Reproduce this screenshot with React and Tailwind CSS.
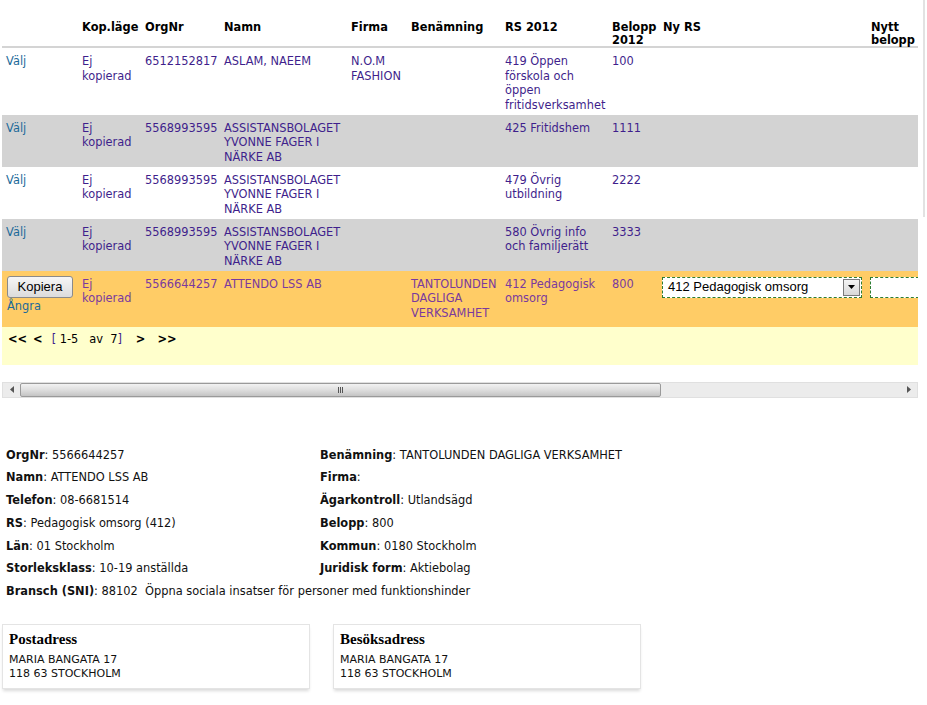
import React from "react";

const rows = [
  {
    bg: "bg-white",
    kop: "Ej kopierad",
    org: "6512152817",
    namn: "ASLAM, NAEEM",
    firma: "N.O.M FASHION",
    ben: "",
    rs: "419 Öppen förskola och öppen fritidsverksamhet",
    belopp: "100",
    h: "h-[67px]",
  },
  {
    bg: "bg-[#d3d3d3]",
    kop: "Ej kopierad",
    org: "5568993595",
    namn: "ASSISTANSBOLAGET YVONNE FAGER I NÄRKE AB",
    firma: "",
    ben: "",
    rs: "425 Fritidshem",
    belopp: "1111",
    h: "h-[52px]",
  },
  {
    bg: "bg-white",
    kop: "Ej kopierad",
    org: "5568993595",
    namn: "ASSISTANSBOLAGET YVONNE FAGER I NÄRKE AB",
    firma: "",
    ben: "",
    rs: "479 Övrig utbildning",
    belopp: "2222",
    h: "h-[52px]",
  },
  {
    bg: "bg-[#d3d3d3]",
    kop: "Ej kopierad",
    org: "5568993595",
    namn: "ASSISTANSBOLAGET YVONNE FAGER I NÄRKE AB",
    firma: "",
    ben: "",
    rs: "580 Övrig info och familjerätt",
    belopp: "3333",
    h: "h-[52px]",
  },
];

const left = [
  ["OrgNr", "5566644257"],
  ["Namn", "ATTENDO LSS AB"],
  ["Telefon", "08-6681514"],
  ["RS", "Pedagogisk omsorg (412)"],
  ["Län", "01 Stockholm"],
  ["Storleksklass", "10-19 anställda"],
];

const right = [
  ["Benämning", "TANTOLUNDEN DAGLIGA VERKSAMHET"],
  ["Firma", ""],
  ["Ägarkontroll", "Utlandsägd"],
  ["Belopp", "800"],
  ["Kommun", "0180 Stockholm"],
  ["Juridisk form", "Aktiebolag"],
];

const td = "align-top pt-[6px] pb-[2px] pl-[4px] pr-[1px]";
const th = "align-top text-left font-bold pt-[21px] pb-0 pl-[4px] pr-[1px] leading-[12.5px]";

const Field = ({ label, value }) => (
  <div className="whitespace-nowrap">
    <span className="font-bold">{label}</span>: {value}
  </div>
);

const AddressBox = ({ title }) => (
  <div className="w-[308px] border border-[#e4e4e4] bg-white pl-[6px] pt-[4px] pb-[7px] shadow-[0_3px_3px_-1px_rgba(0,0,0,0.15)]">
    <div className="font-['Liberation_Serif','DejaVu_Serif',serif] text-[15px] font-bold leading-[20px] text-black">
      {title}
    </div>
    <div className="mt-[4px] text-[11px] leading-[14px] text-[#111]">
      <div>MARIA BANGATA 17</div>
      <div>118 63 STOCKHOLM</div>
    </div>
  </div>
);

export default function App() {
  return (
    <div className="w-[927px] min-h-[705px] bg-white font-['DejaVu_Sans','Verdana',sans-serif] text-[11.4px] text-black">
      <div className="flex">
        <div className="w-[923px]">
          {/* grid */}
          <div className="ml-[2px] w-[916px] overflow-hidden">
            <table className="w-[1010px] table-fixed border-collapse leading-[14.67px]">
              <colgroup>
                <col className="w-[76px]" />
                <col className="w-[63px]" />
                <col className="w-[79px]" />
                <col className="w-[127px]" />
                <col className="w-[60px]" />
                <col className="w-[94px]" />
                <col className="w-[107px]" />
                <col className="w-[51px]" />
                <col className="w-[208px]" />
                <col className="w-[145px]" />
              </colgroup>
              <thead>
                <tr className="border-b-2 border-[#d4d4d4]">
                  <th className={th}></th>
                  <th className={th}>Kop.läge</th>
                  <th className={th}>OrgNr</th>
                  <th className={th}>Namn</th>
                  <th className={th}>Firma</th>
                  <th className={th}>Benämning</th>
                  <th className={th}>RS 2012</th>
                  <th className={th}>
                    Belopp
                    <br />
                    2012
                  </th>
                  <th className={th}>Ny RS</th>
                  <th className={th}>
                    Nytt
                    <br />
                    belopp
                  </th>
                </tr>
              </thead>
              <tbody className="text-[#3f1f8c]">
                {rows.map((r, i) => (
                  <tr key={i} className={`${r.bg} ${r.h}`}>
                    <td className={`${td} text-[#1d6a9a]`}>Välj</td>
                    <td className={td}>{r.kop}</td>
                    <td className={td}>{r.org}</td>
                    <td className={td}>{r.namn}</td>
                    <td className={td}>{r.firma}</td>
                    <td className={td}>{r.ben}</td>
                    <td className={td}>{r.rs}</td>
                    <td className={td}>{r.belopp}</td>
                    <td className={td}></td>
                    <td className={td}></td>
                  </tr>
                ))}
                <tr className="h-[56px] bg-[#ffcc66] text-[#7a3a9e]">
                  <td className="align-top pt-[5px] pl-[5px]">
                    <button className="block h-[22px] w-[66px] rounded-[3px] border border-[#8a8a8a] bg-gradient-to-b from-[#f6f6f6] to-[#dcdcdc] font-['Liberation_Sans',Arial,sans-serif] text-[13px] leading-[20px] text-black">
                      Kopiera
                    </button>
                    <div className="mt-[1px] text-[#1d6a9a]">Ångra</div>
                  </td>
                  <td className={td}>Ej kopierad</td>
                  <td className={td}>5566644257</td>
                  <td className={td}>ATTENDO LSS AB</td>
                  <td className={td}></td>
                  <td className={td}>TANTOLUNDEN DAGLIGA VERKSAMHET</td>
                  <td className={td}>412 Pedagogisk omsorg</td>
                  <td className={td}>800</td>
                  <td className="align-top pt-[6px] pl-[3px]">
                    <div className="flex h-[21px] w-[200px] items-center justify-between border border-dashed border-[#2e7d32] bg-white pl-[5px] pr-[1px] font-['Liberation_Sans',Arial,sans-serif] text-[13px] text-black">
                      <span>412 Pedagogisk omsorg</span>
                      <span className="flex h-[17px] w-[17px] items-center justify-center border border-[#7a7a7a] bg-gradient-to-b from-[#f4f4f4] to-[#d8d8d8]">
                        <svg width="7" height="4" viewBox="0 0 7 4">
                          <path d="M0 0h7L3.5 4z" fill="#000" />
                        </svg>
                      </span>
                    </div>
                  </td>
                  <td className="align-top pt-[6px] pl-[3px]">
                    <div className="h-[21px] w-[100px] border border-dashed border-[#2e7d32] bg-white"></div>
                  </td>
                </tr>
                <tr className="h-[38px] bg-[#ffffcc] text-black">
                  <td colSpan={10} className="align-top pl-[6px] pt-[5px]">
                    <span className="font-bold">&lt;&lt;</span>
                    <span className="ml-[6px] font-bold">&lt;</span>
                    <span className="ml-[9px] text-[#3f1f8c]">[</span>
                    <span> 1-5&nbsp;&nbsp; av&nbsp; 7</span>
                    <span className="text-[#3f1f8c]">]</span>
                    <span className="ml-[14px] font-bold">&gt;</span>
                    <span className="ml-[12px] font-bold">&gt;&gt;</span>
                  </td>
                </tr>
              </tbody>
            </table>
          </div>

          {/* horizontal scrollbar */}
          <div className="ml-[2px] mt-[17px] flex h-[16px] w-[916px] items-center border border-[#e0e0e0] bg-[#ececec]">
            <div className="flex w-[17px] items-center justify-center">
              <svg width="4" height="7" viewBox="0 0 4 7">
                <path d="M4 0v7L0 3.5z" fill="#555" />
              </svg>
            </div>
            <div className="flex h-[14px] w-[641px] items-center justify-center rounded-[2px] border border-[#9a9a9a] bg-gradient-to-b from-[#f2f2f2] via-[#dedede] to-[#c4c4c4]">
              <span className="flex gap-[1px]">
                <span className="h-[6px] w-[1px] bg-[#555]"></span>
                <span className="h-[6px] w-[1px] bg-[#555]"></span>
                <span className="h-[6px] w-[1px] bg-[#555]"></span>
              </span>
            </div>
            <div className="flex-1"></div>
            <div className="flex w-[17px] items-center justify-center">
              <svg width="4" height="7" viewBox="0 0 4 7">
                <path d="M0 0v7L4 3.5z" fill="#555" />
              </svg>
            </div>
          </div>
        </div>
        <div className="h-[217px] w-[2px] bg-[#e2e2e2]"></div>
      </div>

      {/* details */}
      <div className="mt-[46px] pl-[6px] leading-[22.7px] text-[#111]">
        <div className="grid grid-cols-[314px_1fr]">
          <div>
            {left.map(([l, v]) => (
              <Field key={l} label={l} value={v} />
            ))}
          </div>
          <div>
            {right.map(([l, v]) => (
              <Field key={l} label={l} value={v} />
            ))}
          </div>
        </div>
        <div className="whitespace-pre">
          <span className="font-bold">Bransch (SNI)</span>: 88102  Öppna sociala insatser för personer med funktionshinder
        </div>
      </div>

      {/* addresses */}
      <div className="mt-[21px] flex gap-[23px] pl-[2px]">
        <AddressBox title="Postadress" />
        <AddressBox title="Besöksadress" />
      </div>
    </div>
  );
}
